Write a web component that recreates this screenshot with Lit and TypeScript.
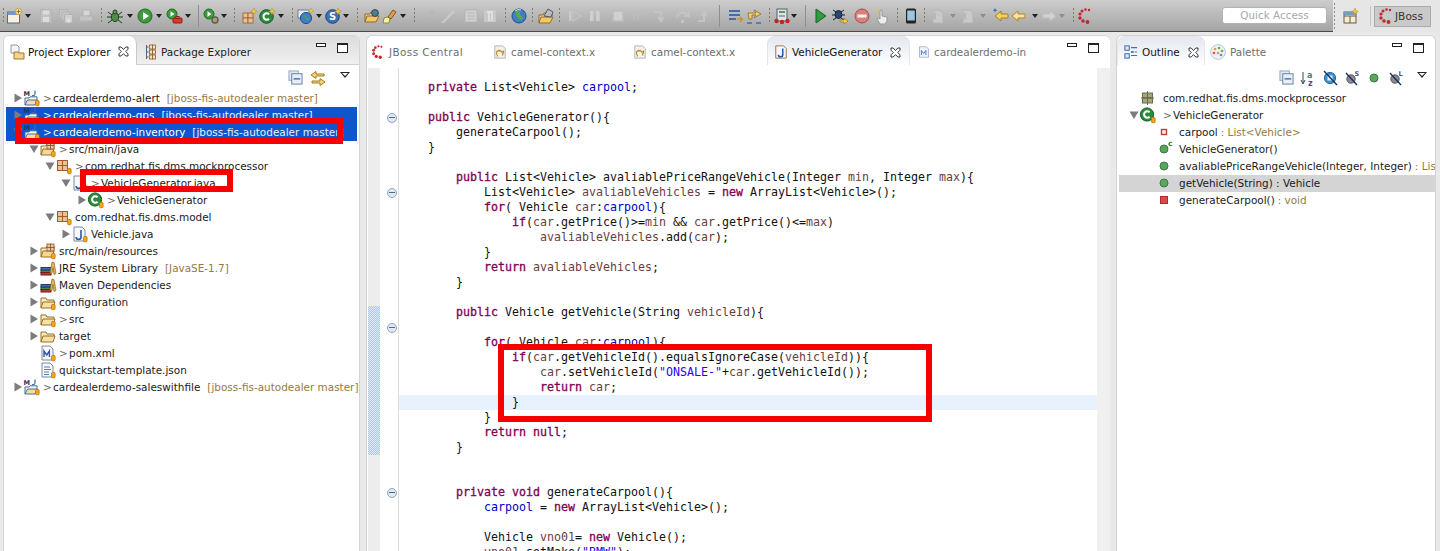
import { LitElement, html, css, svg } from "lit";
import { customElement } from "lit/decorators.js";

const jar = svg`<rect x="11.5" y="10.5" width="3.6" height="5.2" rx="1" fill="#f0a91e" stroke="#c56f0c" stroke-width=".8"/>`;
const ICONS: Record<string, any> = {
  newfile: svg`<rect x="1.5" y="4" width="12" height="11" fill="#f7f2dc" stroke="#4c6a93"/><rect x="1.5" y="4" width="12" height="3" fill="#6f9ad0"/><circle cx="12.5" cy="3.5" r="3.2" fill="#f6e3a2" stroke="#b98a1e" stroke-width=".7"/><path d="M12.5 1.5v4M10.5 3.5h4" stroke="#8f6a1c" stroke-width=".9"/>`,
  save: svg`<path d="M2.5 1.5h9l2 2v11h-11z" fill="#c2c2c2" stroke="#b4b4b4"/><rect x="5" y="2.5" width="6" height="4" fill="#dcdcdc"/><rect x="5" y="9" width="6" height="5" fill="#dcdcdc"/>`,
  saveall: svg`<path d="M1.5 1.5h8v8h-8z" fill="#c6c6c6" stroke="#b4b4b4"/><path d="M4 4h8v8H4z" fill="#c6c6c6" stroke="#b4b4b4"/><path d="M6.5 6.5h8v8h-8z" fill="#cfcfcf" stroke="#b4b4b4"/><rect x="8.5" y="10.5" width="4" height="4" fill="#e0e0e0"/>`,
  print: svg`<path d="M5 2h7v6H5z" fill="#d8d8d8" stroke="#b4b4b4"/><path d="M1.5 8h13v5h-13z" fill="#c4c4c4" stroke="#b4b4b4"/>`,
  bug: svg`<ellipse cx="8" cy="9" rx="3.6" ry="4.6" fill="#4f8f4a" stroke="#1f3d20"/><circle cx="8" cy="4" r="2" fill="#6a9c5c" stroke="#1f3d20"/><path d="M1 4l4 3M15 4l-4 3M0 9h4M12 9h4M1 15l4-3M15 15l-4-3" stroke="#1f3d20" fill="none"/>`,
  run: svg`<circle cx="8" cy="8" r="7" fill="#3c9b3c" stroke="#1e6a1e"/><path d="M6 4l6 4-6 4z" fill="#fff"/>`,
  ext: svg`<circle cx="6" cy="6" r="5" fill="#3c9b3c" stroke="#1e6a1e"/><path d="M4.5 3.2l4 2.8-4 2.8z" fill="#fff"/><rect x="7" y="10" width="9" height="5" rx="1" fill="#d63a2e" stroke="#8f1d15"/><rect x="10" y="8.5" width="3" height="2" fill="none" stroke="#8f1d15"/>`,
  hist: svg`<circle cx="6" cy="6" r="5" fill="#3c9b3c" stroke="#1e6a1e"/><path d="M4.5 3.2l4 2.8-4 2.8z" fill="#fff"/><circle cx="12" cy="12" r="3" fill="#a3a07a" stroke="#5f5d44" stroke-width="1.4"/>`,
  newpkg: svg`<g stroke="#a86d3a" fill="#e6c39a"><rect x="2" y="5" width="5" height="5"/><rect x="7" y="5" width="5" height="5"/><rect x="2" y="10" width="5" height="5"/><rect x="7" y="10" width="5" height="5"/></g><path d="M13 0l1 2.4 2.4 1-2.4 1-1 2.4-1-2.4-2.4-1 2.4-1z" fill="#f1c94a" stroke="#b98a1e" stroke-width=".5"/>`,
  newcls: svg`<circle cx="7.5" cy="8.5" r="6.8" fill="#2c8a3c" stroke="#145c22"/><path d="M10 6.3a3.2 3.2 0 1 0 0 4.4" fill="none" stroke="#fff" stroke-width="2"/><path d="M13 0l1 2.4 2.4 1-2.4 1-1 2.4-1-2.4-2.4-1 2.4-1z" fill="#f1c94a" stroke="#b98a1e" stroke-width=".5"/>`,
  newweb: svg`<rect x="1" y="2" width="11" height="8" fill="#e8edf5" stroke="#6d7f9b"/><circle cx="9" cy="10" r="5.6" fill="#3f7fc8" stroke="#234f87"/><path d="M6 8c2-2 4 0 3 2s3 2 4 1" fill="#59a74a"/><path d="M14 0l.9 2.1 2.1.9-2.1.9-.9 2.1-.9-2.1-2.1-.9 2.1-.9z" fill="#f1c94a" stroke="#b98a1e" stroke-width=".4"/>`,
  news: svg`<circle cx="7.5" cy="8.5" r="6.8" fill="#3f6fb5" stroke="#1e4480"/><text x="7.5" y="12" font-size="10" font-weight="700" font-family="DejaVu Sans" fill="#fff" text-anchor="middle">S</text><path d="M13 0l1 2.4 2.4 1-2.4 1-1 2.4-1-2.4-2.4-1 2.4-1z" fill="#f1c94a" stroke="#b98a1e" stroke-width=".5"/>`,
  openf: svg`<path d="M1 14V6h5l1-2h6v3" fill="#f0d08a" stroke="#8f6a28"/><path d="M1 14l2-6h12l-3 6z" fill="#f4c768" stroke="#8f6a28"/><circle cx="11" cy="5" r="3.4" fill="#4e7f8f" stroke="#2c4a55"/>`,
  brush: svg`<path d="M2 15l1-5 4-1 2 2-1 4z" fill="#f4efb0" stroke="#8f8a3a"/><path d="M7 9l5-7 3 2-5 7z" fill="#e0a040" stroke="#7f5a1c"/>`,
  dis1: svg`<path d="M2 4l5 4-5 4zM9 3h5v4H9z" fill="#b8b8b8"/>`,
  dis2: svg`<path d="M1 15L13 2l2 2L4 15z" fill="#c8c8c8"/>`,
  dis3: svg`<rect x="2" y="2" width="12" height="12" fill="#d2d2d2" stroke="#b4b4b4"/><path d="M4 5h8M4 8h8M4 11h8" stroke="#b4b4b4"/>`,
  para: svg`<rect x="2" y="2" width="12" height="12" fill="#c8c8c8"/><path d="M7 4v9M10 4v9M5 4h6" stroke="#e6e6e6" stroke-width="1.4" fill="none"/>`,
  globe: svg`<circle cx="8" cy="8" r="7" fill="#3f7fc8" stroke="#234f87"/><path d="M5 3c3-1 5 1 4 3s3 2 3 4-3 2-4 1-4-3-3-8z" fill="#5fa64a"/><path d="M4 3a6 6 0 0 1 6-1" stroke="#dce9f8" fill="none"/>`,
  openp: svg`<path d="M1 15V7h4l1-2h8v3" fill="#f2d7a0" stroke="#8f6a28"/><path d="M1 15l2-6h12l-3 6z" fill="#f4c768" stroke="#9a6f22"/><path d="M6 8l4-7 5 3-2 5z" fill="#b8bcc4" stroke="#55585e"/>`,
  resume: svg`<rect x="2" y="3" width="2.5" height="10" fill="#c9c9c9"/><path d="M6 3l8 5-8 5z" fill="none" stroke="#c2c2c2" stroke-width="1.5"/>`,
  pause: svg`<rect x="3" y="3" width="3.6" height="10" fill="#cfcfcf"/><rect x="9" y="3" width="3.6" height="10" fill="#cfcfcf"/>`,
  stopd: svg`<rect x="3" y="3" width="10" height="10" fill="#d0d0d0" stroke="#bcbcbc" stroke-width="1.4"/>`,
  dis4: svg`<path d="M3 13V4l4 7V4M9 3l4 4M13 3l-4 4" stroke="#bcbcbc" fill="none" stroke-width="1.5"/>`,
  stepin: svg`<path d="M2 4h7v8M6 9l3 4 3-4" stroke="#c4c4c4" fill="none" stroke-width="2"/>`,
  stepov: svg`<path d="M2 9a6 5 0 0 1 11-2M14 3v5h-5" stroke="#c4c4c4" fill="none" stroke-width="2"/><rect x="6" y="12" width="3" height="3" fill="#c4c4c4"/>`,
  stepret: svg`<path d="M3 13h6V5M6 8l3-4 3 4" stroke="#c4c4c4" fill="none" stroke-width="2"/>`,
  filter: svg`<path d="M1 3h11M1 7h11M1 11h7" stroke="#3f6ea8" stroke-width="2"/><path d="M9 11h5l-2-2m2 2l-2 3" stroke="#c2972e" stroke-width="1.6" fill="none"/>`,
  mergef: svg`<path d="M1 15h5M10 15h5" stroke="#3f6ea8" stroke-width="1.6"/><path d="M2 5h8l-2-3 7 4-7 4 2-3H6v4H3z" fill="#f2cd6a" stroke="#8f6a28" stroke-width=".8"/>`,
  server: svg`<rect x="3" y="1" width="10" height="12" fill="#dfe3e8" stroke="#55606e"/><rect x="5" y="3" width="6" height="2" fill="#5a9a52"/><rect x="5" y="7" width="6" height="2" fill="#9aa3ad"/><circle cx="2.5" cy="13" r="2.2" fill="#c9211e"/><circle cx="8" cy="14" r="2.2" fill="#c9211e"/><circle cx="13.5" cy="13" r="2.2" fill="#c9211e"/>`,
  playg: svg`<path d="M4 1l10 7-10 7z" fill="#2e9b3d" stroke="#176325"/>`,
  bugarr: svg`<ellipse cx="6.5" cy="6.5" rx="3.4" ry="4" fill="#264a70" stroke="#0f2036"/><path d="M1 2l3 2M12 2l-3 2M0 7h3M10 7h3M1 12l3-2M12 12l-3-2" stroke="#0f2036" fill="none"/><path d="M8 12h4v-2l4 3.2-4 2.8v-2H8z" fill="#f2cd4a" stroke="#8f6a28" stroke-width=".6"/>`,
  stopr: svg`<circle cx="8" cy="8" r="7" fill="#d8807c" stroke="#a94e4a"/><rect x="3.5" y="6.5" width="9" height="3" fill="#f4f0f0"/>`,
  hand: svg`<path d="M6 8V3a1 1 0 0 1 2 0v5l5 1v4l-2 3H6L3 11l1-1 2 1z" fill="#ececec" stroke="#9a9a9a"/><path d="M4 1l2 2M3 4h2" stroke="#e2bb45" stroke-width="1.4"/>`,
  phone: svg`<rect x="3" y="0.5" width="10" height="15" rx="1.5" fill="#222"/><rect x="4.2" y="2.5" width="7.6" height="10" fill="#9fc4de"/>`,
  dis5: svg`<path d="M3 2h7l3 3v10H3z" fill="#c9c9c9" stroke="#b4b4b4"/><path d="M1 8l5-4v8z" fill="#b8b8b8"/>`,
  navstar: svg`<path d="M16 6h-7V3L3 8l6 5v-3h7z" fill="#f6cf62" stroke="#a97e18"/><path d="M3 0l.7 1.6 1.6.7-1.6.7-.7 1.6-.7-1.6L.7 2.3l1.6-.7z" fill="#3e69b4"/>`,
  navl: svg`<path d="M15 6H8V3L2 8l6 5v-3h7z" fill="#fae2a0" stroke="#b18622"/>`,
  navr: svg`<path d="M1 6h7V3l6 5-6 5v-3H1z" fill="#d2d2d2" stroke="#c0c0c0"/>`,
  jboss: svg`<g fill="#c2272d"><circle cx="12" cy="2" r="1.2"/><circle cx="8.5" cy="1.5" r="1.3"/><circle cx="5" cy="3" r="1.5"/><circle cx="3" cy="6" r="1.6"/><circle cx="3" cy="10" r="1.7"/><circle cx="6" cy="13" r="1.8"/><circle cx="10.5" cy="14" r="1.9"/></g>`,
  persp: svg`<rect x="2" y="4" width="12" height="11" fill="#f4ecd8" stroke="#6b5a3a"/><path d="M2 8h12M8 8v7" stroke="#6b5a3a"/><rect x="2" y="4" width="12" height="3" fill="#7d9ac0"/><path d="M13 0l1 2.4 2.4 1-2.4 1-1 2.4-1-2.4-2.4-1 2.4-1z" fill="#f1c94a" stroke="#b98a1e" stroke-width=".5"/>`,
  projexp: svg`<path d="M2 1h6l2 2v6H2z" fill="#f5f5f5" stroke="#8c9ab0"/><path d="M5 8h4l1 1h5v6H5z" fill="#f3d48a" stroke="#a27a2c"/>`,
  pkgexp: svg`<path d="M1.5 1v14M1.5 3h2M1.5 8h2M1.5 13h2" stroke="#55606e"/><g fill="#f3e2c8" stroke="#8a5a2c" stroke-width=".8"><rect x="4.5" y="1" width="3" height="4"/><rect x="7.5" y="1" width="3" height="4"/><rect x="4.5" y="6" width="3" height="4"/><rect x="7.5" y="6" width="3" height="4"/><rect x="4.5" y="11" width="3" height="4"/><rect x="7.5" y="11" width="3" height="4"/></g>`,
  camel: svg`<path d="M2 1h9l3 3v11H2z" fill="#f7f1e2" stroke="#a7b0bd"/><path d="M4 11V8l2-2 1 1 1-1 2 2 2-1v2l-1 1v2M5 11v2" stroke="#b98b3a" stroke-width="1.4" fill="none"/>`,
  javaed: svg`<path d="M2 1h9l3 3v11H2z" fill="#f8f8fb" stroke="#8a6a32"/><path d="M10 4v7a2.5 2.5 0 0 1-5 0" stroke="#2c56a8" stroke-width="1.8" fill="none"/>`,
  mfile: svg`<path d="M2 1h9l3 3v11H2z" fill="#eef3f9" stroke="#9aa8ba"/><path d="M4.5 12V6l3 4 3-4v6" stroke="#4f80ba" stroke-width="1.3" fill="none"/>`,
  collapse: svg`<rect x="1" y="1" width="10" height="10" fill="#dfe7f1" stroke="#8fa3bd"/><rect x="4" y="4" width="11" height="11" fill="#e8eff7" stroke="#5c7ea6"/><path d="M6 9.5h7" stroke="#2f5c94" stroke-width="1.4"/>`,
  link: svg`<path d="M14 4H6V1.5L1 5l5 3.5V6h8z" fill="#f6d67e" stroke="#a57b1c"/><path d="M2 11h8V8.5l5 3.5-5 3.5V13H2z" fill="#f6d67e" stroke="#a57b1c"/>`,
  project: svg`<text x="-0.5" y="5.5" font-size="6.5" font-weight="700" font-family="DejaVu Sans" fill="#1f3560">M</text><path d="M11 0.5v3.5a2 2 0 0 1-3 1.4" fill="none" stroke="#3f6aa6" stroke-width="1.2"/><path d="M1 15V8h4l1-1.2h7V10" fill="#fff8e4" stroke="#3f6aa6"/><path d="M1 15l2.5-5H13l-2 5z" fill="#f7dfa2" stroke="#3f6aa6"/>${jar}`,
  srcf: svg`<path d="M1 14V5h5l1-2h7v5" fill="#fbe9bf" stroke="#96702a"/><path d="M1 14l2-6h11l-2 6z" fill="#f5d894" stroke="#96702a"/><g fill="#e9c9a0" stroke="#96512a" stroke-width=".8"><rect x="7" y="1" width="3.5" height="3.5"/><rect x="10.5" y="1" width="3.5" height="3.5"/><rect x="7" y="4.5" width="3.5" height="3.5"/><rect x="10.5" y="4.5" width="3.5" height="3.5"/></g>${jar}`,
  pkg: svg`<g fill="#e6c39a" stroke="#a35a2c"><rect x="1.5" y="2.5" width="5" height="5"/><rect x="6.5" y="2.5" width="5" height="5"/><rect x="1.5" y="7.5" width="5" height="5"/><rect x="6.5" y="7.5" width="5" height="5"/></g>${jar}`,
  pkgo: svg`<g fill="#a7a67c" stroke="#6b6a4c"><rect x="2.5" y="3" width="5" height="5"/><rect x="7.5" y="3" width="5" height="5"/><rect x="2.5" y="8" width="5" height="5"/><rect x="7.5" y="8" width="5" height="5"/></g><path d="M7.5 1v14M1 8h13" stroke="#6b6a4c"/>`,
  java: svg`<path d="M2 1h8l3 3v11H2z" fill="#f8f8fb" stroke="#7b8a9e"/><path d="M9 4v7a2.4 2.4 0 0 1-4.8 0" stroke="#2c56a8" stroke-width="1.6" fill="none"/>${jar}`,
  cls: svg`<circle cx="7" cy="7.5" r="6.6" fill="#2c8a3c" stroke="#145c22"/><path d="M9.6 5.3a3.2 3.2 0 1 0 0 4.4" fill="none" stroke="#fff" stroke-width="2"/>${jar}`,
  lib: svg`<rect x="1" y="10" width="10" height="2.5" fill="#3f8f4f" stroke="#1f4a2a"/><rect x="1" y="7.5" width="10" height="2.5" fill="#3f6fb5" stroke="#1f3a6a"/><rect x="1" y="12.5" width="10" height="2.5" fill="#c0392b" stroke="#6d1d15"/><path d="M10 13l2-11 2 .5 2 11-2 1-1-7-1 6z" fill="#e6b45a" stroke="#8a6420" stroke-width=".7"/>`,
  folder: svg`<path d="M1 14V4h5l1 2h7v2" fill="#fbe9bf" stroke="#96702a"/><path d="M1 14l2-6h12l-2 6z" fill="#f8dfa4" stroke="#96702a"/>`,
  folderj: svg`<path d="M1 14V4h5l1 2h7v2" fill="#fbe9bf" stroke="#96702a"/><path d="M1 14l2-6h12l-2 6z" fill="#f8dfa4" stroke="#96702a"/>${jar}`,
  pom: svg`<path d="M2 1h8l3 3v11H2z" fill="#f8f8fb" stroke="#7b8a9e"/><path d="M4 12V6l2.7 4 2.7-4v6" stroke="#2c56a8" stroke-width="1.4" fill="none"/>${jar}`,
  doc: svg`<path d="M2 1h8l3 3v11H2z" fill="#f8f8fb" stroke="#7b8a9e"/><path d="M4 5h6M4 7.5h7M4 10h5M4 12.5h5" stroke="#4f80ba"/>${jar}`,
  green: svg`<circle cx="8" cy="8" r="4" fill="#5aa65e" stroke="#3a7a42"/>`,
  greenc: svg`<circle cx="8" cy="8" r="4" fill="#5aa65e" stroke="#3a7a42"/><text x="12" y="5" font-size="7.5" font-weight="700" font-family="DejaVu Sans" fill="#1e8a2e">c</text>`,
  redsm: svg`<rect x="5.5" y="5.5" width="5" height="5" fill="#f6f0f0" stroke="#c23a3a" stroke-width="1.4"/>`,
  redsq: svg`<rect x="4.5" y="4.5" width="7" height="7" fill="#e0474b" stroke="#b02a2e"/>`,
  sortaz: svg`<path d="M3 2v11M1 10l2 4 2-4" stroke="#444" fill="none"/><text x="7" y="7.5" font-size="8" font-weight="700" font-family="DejaVu Sans" fill="#2f8a78">a</text><text x="8" y="15.5" font-size="8" font-weight="700" font-family="DejaVu Sans" fill="#7a2f96">z</text>`,
  hidef: svg`<circle cx="8" cy="8" r="5.6" fill="#3f93c9" stroke="#1f6a99"/><rect x="5.5" y="5.5" width="5" height="5" fill="#e8f2fa"/><path d="M2 1l13 14" stroke="#17306a" stroke-width="1.4"/>`,
  hides: svg`<circle cx="7" cy="9" r="4.2" fill="#8c8c8c" stroke="#5a5a5a"/><path d="M2 3l11 12" stroke="#17306a" stroke-width="1.4"/><text x="10.5" y="6" font-size="6.5" font-weight="700" font-family="DejaVu Sans" fill="#3a5a90">S</text>`,
  hidel: svg`<circle cx="7" cy="9" r="4.2" fill="#8c8c8c" stroke="#5a5a5a"/><path d="M2 3l11 12" stroke="#17306a" stroke-width="1.4"/><text x="10.5" y="6" font-size="6.5" font-weight="700" font-family="DejaVu Sans" fill="#3a5a90">L</text>`,
  outline: svg`<rect x="1" y="1" width="5" height="5" fill="#dfeaf7" stroke="#3f6fb5" stroke-width="1.2"/><rect x="1" y="10" width="5" height="5" fill="#dfeaf7" stroke="#3f6fb5" stroke-width="1.2"/><path d="M8 3h7M8 12h7" stroke="#3f6fb5" stroke-width="1.2"/><rect x="8" y="7" width="3" height="2" fill="#3f6fb5"/><path d="M12 8h3" stroke="#3f6fb5"/>`,
  palette: svg`<circle cx="8" cy="8" r="7.4" fill="#eef1f6" stroke="#bcc6d6"/><circle cx="5" cy="5" r="1.3" fill="#e0a040"/><circle cx="9" cy="4" r="1.3" fill="#6fae5a"/><circle cx="12" cy="7" r="1.3" fill="#6fae5a"/><circle cx="4" cy="9" r="1.3" fill="#d9534f"/><circle cx="8" cy="9" r="1.3" fill="#e0a040"/><circle cx="11" cy="11" r="1.3" fill="#5a8fd0"/>`,
};

const ic = (n: string, s = 16) => html`<svg class="ic" width=${s} height=${s} viewBox="0 0 16 16">${ICONS[n]}</svg>`;
const closeX = html`<svg class="ic" width="11" height="11" viewBox="0 0 11 11"><path d="M1 1h2.2L5.5 3.5 7.8 1H10v2.2L7.7 5.5 10 7.8V10H7.8L5.5 7.6 3.2 10H1V7.8l2.3-2.3L1 3.2z" fill="#fff" stroke="#222" stroke-width=".9"/></svg>`;

// [kind, centre x]: slots are sized from the distance between neighbours
const TB: [string, number][] = [["grip",3],["newfile",15],["a",29],["save",46],["saveall",68],["print",89],["grip",103],["bug",117],["a",130],["run",147],["a",160],["ext",176],["a",190],["sep",200],["hist",211],["a",227],["grip",235],["newpkg",248],["newcls",270],["a",284],["grip",292],["newweb",307],["a",319],["news",335],["a",349],["grip",358],["openf",371],["brush",393],["a",405],["grip",415],["dis1",427],["dis2",450],["dis3",472],["para",494],["grip",507],["globe",521],["grip",534],["openp",548],["grip",561],["resume",574],["pause",597],["stopd",619],["dis4",641],["stepin",661],["stepov",684],["stepret",707],["sep",721],["filter",736],["mergef",757],["grip",771],["server",783],["a",797],["sep",806],["playg",819],["bugarr",841],["stopr",864],["hand",885],["grip",899],["phone",913],["grip",926],["dis5",939],["ag",955],["dis5",970],["ag",983],["navstar",1000],["navl",1022],["a",1035],["navr",1052],["ag",1065],["grip",1073],["jboss",1087]];

interface Row { l: number; a?: string; i: string; p?: boolean; n: string; d?: string; s?: boolean; }
const TREE: Row[] = [
  { l: 0, a: "r", i: "project", p: true, n: "cardealerdemo-alert", d: "[jboss-fis-autodealer master]" },
  { l: 0, a: "r", i: "project", p: true, n: "cardealerdemo-gps", d: "[jboss-fis-autodealer master]", s: true },
  { l: 0, a: "d", i: "project", p: true, n: "cardealerdemo-inventory", d: "[jboss-fis-autodealer master]", s: true },
  { l: 1, a: "d", i: "srcf", p: true, n: "src/main/java" },
  { l: 2, a: "d", i: "pkg", p: true, n: "com.redhat.fis.dms.mockprocessor" },
  { l: 3, a: "d", i: "java", p: true, n: "VehicleGenerator.java" },
  { l: 4, a: "r", i: "cls", p: true, n: "VehicleGenerator" },
  { l: 2, a: "d", i: "pkg", n: "com.redhat.fis.dms.model" },
  { l: 3, a: "r", i: "java", n: "Vehicle.java" },
  { l: 1, a: "r", i: "srcf", n: "src/main/resources" },
  { l: 1, a: "r", i: "lib", n: "JRE System Library", d: "[JavaSE-1.7]" },
  { l: 1, a: "r", i: "lib", n: "Maven Dependencies" },
  { l: 1, a: "r", i: "folderj", n: "configuration" },
  { l: 1, a: "r", i: "folderj", p: true, n: "src" },
  { l: 1, a: "r", i: "folder", n: "target" },
  { l: 1, i: "pom", p: true, n: "pom.xml" },
  { l: 1, i: "doc", n: "quickstart-template.json" },
  { l: 0, a: "r", i: "project", p: true, n: "cardealerdemo-saleswithfile", d: "[jboss-fis-autodealer master]" },
];

const OUTLINE: Row[] = [
  { l: 0, i: "pkgo", n: "com.redhat.fis.dms.mockprocessor" },
  { l: 0, a: "d", i: "cls", p: true, n: "VehicleGenerator" },
  { l: 1, i: "redsm", n: "carpool", d: ": List<Vehicle>" },
  { l: 1, i: "greenc", n: "VehicleGenerator()" },
  { l: 1, i: "green", n: "avaliablePriceRangeVehicle(Integer, Integer)", d: ": List<Vehicle>" },
  { l: 1, i: "green", n: "getVehicle(String) : Vehicle", s: true },
  { l: 1, i: "redsq", n: "generateCarpool()", d: ": void" },
];

const CODE = `
    private List<Vehicle> carpool;

    public VehicleGenerator(){
        generateCarpool();
    }

        public List<Vehicle> avaliablePriceRangeVehicle(Integer min, Integer max){
            List<Vehicle> avaliableVehicles = new ArrayList<Vehicle>();
            for( Vehicle car:carpool){
                if(car.getPrice()>=min && car.getPrice()<=max)
                    avaliableVehicles.add(car);
            }
            return avaliableVehicles;
        }

        public Vehicle getVehicle(String vehicleId){

            for( Vehicle car:carpool){
                if(car.getVehicleId().equalsIgnoreCase(vehicleId)){
                    car.setVehicleId("ONSALE-"+car.getVehicleId());
                    return car;
                }
            }
            return null;
        }


        private void generateCarpool(){
            carpool = new ArrayList<Vehicle>();

            Vehicle vno01= new Vehicle();
            vno01.setMake("BMW");`.slice(1).split("\n");

const FOLD = new Set([2, 7, 16, 27]);
const CURRENT = 21;
const TOK = /("[^"]*"|\b(?:public|private|void|new|for|if|return|null)\b|\bcarpool\b|\b(?:car|vehicleId|min|max|avaliableVehicles|vno01)\b)/;
const tok = (line: string) =>
  line.split(TOK).map((t, i) => {
    if (i % 2 === 0) return t;
    if (t[0] === '"') return html`<span class="str">${t}</span>`;
    if (t === "carpool") return html`<span class="fld">${t}</span>`;
    if (/^(car|vehicleId|min|max|avaliableVehicles|vno01)$/.test(t)) return html`<span class="loc">${t}</span>`;
    return html`<span class="kw">${t}</span>`;
  });

const arrow = (a?: string) =>
  a === "r"
    ? html`<svg class="ic" width="10" height="10" viewBox="0 0 10 10"><path d="M1.5 0.5L9 5 1.5 9.5z" fill="#7c7c7c"/></svg>`
    : a === "d"
    ? html`<svg class="ic" width="10" height="10" viewBox="0 0 10 10"><path d="M0.5 1.5H9.5L5 9z" fill="#7c7c7c"/></svg>`
    : html`<span class="noarrow"></span>`;

const minMax = html`<div class="minmax"><span class="mn"></span><span class="mx"></span></div>`;

@customElement("app-root")
export class AppRoot extends LitElement {
  static styles = css`
    :host { display: block; position: relative; width: 1440px; height: 551px; overflow: hidden; background: #e9e9e9; font-family: "DejaVu Sans", sans-serif; font-size: 10.45px; color: #1a1a1a; }
    .ic { display: block; flex: none; overflow: visible; }
    .top { display: flex; height: 32px; }
    .tb { flex: none; width: 1333px; height: 32px; box-sizing: border-box; display: flex; align-items: center; background: linear-gradient(#cdcdcd, #a4a4a4); border-bottom: 1px solid #4a4a4a; }
    .slot { flex: none; display: flex; align-items: center; justify-content: center; height: 24px; }
    .grip { width: 1px; height: 15px; background-image: repeating-linear-gradient(#7f7f5f 0 2px, transparent 2px 4px); }
    .sepv { width: 1px; height: 22px; background: #8f8f8f; }
    .arr { width: 0; height: 0; border-left: 3.5px solid transparent; border-right: 3.5px solid transparent; border-top: 4px solid #222; }
    .arr.g { border-top-color: #8e8e8e; }
    .quick { position: absolute; left: 1222px; top: 7px; width: 105px; height: 17px; box-sizing: border-box; border: 1px solid #b2b2b2; border-radius: 3px; background: #fff; color: #a8a8a8; text-align: center; font-size: 10.4px; line-height: 15px; }
    .persp { flex: 1; display: flex; align-items: center; padding-left: 1px; background: #e6e6e6; height: 32px; }
    .grip2 { width: 1px; height: 26px; margin-right: 7px; background-image: repeating-linear-gradient(#8c8c8c 0 2px, transparent 2px 4px); }
    .psep { width: 1px; height: 20px; background: #c4c4c4; margin: 0 3px 0 12px; }
    .jb { display: flex; align-items: center; gap: 1px; width: 57px; height: 21px; box-sizing: border-box; padding-left: 3px; background: #c9c9c9; border: 1px solid #ababab; color: #333; font-size: 10.6px; }

    .main { display: flex; height: 519px; padding: 3px 4px 0 3px; box-sizing: border-box; gap: 6px; }
    .pane { background: #fff; border-radius: 6px 6px 0 0; border: 1px solid #d4d4d4; border-bottom: 0; box-sizing: border-box; display: flex; flex-direction: column; overflow: hidden; flex: none; height: 100%; }
    .left { width: 357px; }
    .center { width: 744px; border-right: 0; }
    .right { width: 320px; }
    .tabs { flex: none; box-sizing: border-box; height: 29px; display: flex; align-items: center; position: relative; }
    .left .tabs { background: linear-gradient(#dcdcdc, #f0f0f0); border-bottom: 1px solid #d0d0d0; }
    .tab { display: flex; align-items: center; height: 100%; box-sizing: border-box; flex: none; padding-top: 2px; color: #6e6e6e; white-space: nowrap; gap: 4px; }
    .tab.on { color: #111; }
    .wide { letter-spacing: .4px; }
    .left .tab.on { background: #fff; width: 133px; padding-left: 5px; gap: 3px; border-radius: 0 8px 0 0; border-right: 1px solid #c8c8c8; height: 29px; margin-top: 1px; }
    .left .tab.off { padding: 3px 0 0 8px; gap: 0; color: #222; }
    .center .tab.on, .right .tab.on { background: linear-gradient(#e3e7ef, #fff); border-radius: 8px 8px 0 0; border: 1px solid #e2e5ea; border-bottom: 0; }
    .tab .x { margin-left: 4px; }
    .minmax { position: absolute; right: 0; top: 0; display: flex; }
    .mn { position: absolute; box-sizing: border-box; width: 10px; height: 4px; border: 1px solid #222; background: #fff; }
    .mx { position: absolute; box-sizing: border-box; width: 11px; height: 10px; border: 1px solid #222; border-top-width: 2px; background: #fff; }
    .mn { top: 7px; right: 33px; } .mx { top: 7px; right: 11px; }
    .vbar { flex: none; height: 25px; display: flex; justify-content: flex-end; align-items: center; gap: 7px; padding-right: 9px; }
    .right .vbar { gap: 6px; padding-right: 8px; }
    .menu { width: 0; height: 0; border-left: 5.5px solid transparent; border-right: 5.5px solid transparent; border-top: 6px solid #222; margin: -6px 0 0 7.5px; position: relative; }
    .menu::after { content: ""; position: absolute; left: -3.5px; top: -5px; border-left: 3.5px solid transparent; border-right: 3.5px solid transparent; border-top: 3.8px solid #fff; }
    .tree { flex: 1; overflow: hidden; padding: 0 2px; }
    .right .tree { padding: 0 0 0 2px; }
    .row { display: flex; align-items: center; height: 17px; box-sizing: border-box; padding-bottom: 1px; white-space: nowrap; }
    .row .noarrow { width: 10px; flex: none; }
    .row .i { margin-left: 1px; width: 17px; flex: none; }
    .right .row .i { width: 21px; }
    .row .gt { color: #6d6d6d; margin-left: 2px; width: 8px; flex: none; }
    .row .nm { margin-left: 2px; }
    .row .dc { color: #95793f; margin-left: 7px; }
    .right .row .dc { margin-left: 3px; }
    .row.sel { background: #0f55cb; color: #fff; }
    .row.sel .gt, .row.sel .dc { color: #e9f0fb; }
    .row.gray { background: #d4d4d4; }

    .edit { flex: 1; display: flex; min-height: 0; margin-top: 3px; padding-left: 1px; overflow: hidden; }
    .ruler { flex: none; width: 12px; background: #ededed; display: flex; flex-direction: column; }
    .ruler .g1 { height: 238px; flex: none; }
    .ruler .hatch { height: 149px; flex: none; background: repeating-conic-gradient(#a9c9f0 0 25%, #dce9fa 0 50%) 0 0 / 2px 2px; }
    .lines { flex: 1; min-width: 0; overflow: hidden; }
    .ln { display: flex; height: 15px; }
    .ln.pad { height: 12px; }
    .fold { flex: none; width: 19px; box-sizing: border-box; border-right: 1px solid #dedede; display: flex; align-items: center; justify-content: center; padding-left: 6px; }
    .fi { width: 10px; height: 10px; border-radius: 50%; box-sizing: border-box; border: 1px solid #8fa5c0; background: #dfe8f3; display: flex; align-items: center; justify-content: center; }
    .fi::after { content: ""; width: 6px; height: 1px; background: #51688a; }
    .code { flex: 1; padding-left: 1px; font: 11.63px/15px "DejaVu Sans Mono", monospace; white-space: pre; color: #111; }
    .ln.cur .code { background: #e8f2fe; }
    .kw { color: #7f0055; -webkit-text-stroke: .3px #7f0055; }
    .fld { color: #0000c0; }
    .str { color: #2a00ff; }
    .loc { color: #6a3e3e; }
    .over { flex: none; width: 13px; background: #f0f0f0; }

    .mark { position: absolute; box-sizing: border-box; border: 6px solid #f70000; pointer-events: none; }
    .m1 { left: 15px; top: 118px; width: 328px; height: 26px; }
    .m2 { left: 80px; top: 169px; width: 153px; height: 23px; }
    .m3 { left: 498px; top: 344px; width: 434px; height: 78px; }
  `;

  private toolbar() {
    return TB.map(([k, c], i) => {
      const prev = i ? TB[i - 1][1] : 0;
      const next = i < TB.length - 1 ? TB[i + 1][1] : c + 10;
      const w = (next - c) / 2 + (c - prev) / 2;
      let inner;
      if (k === "grip") inner = html`<span class="grip"></span>`;
      else if (k === "sep") inner = html`<span class="sepv"></span>`;
      else if (k === "a") inner = html`<span class="arr"></span>`;
      else if (k === "ag") inner = html`<span class="arr g"></span>`;
      else inner = ic(k);
      return html`<span class="slot" style="width:${w}px">${inner}</span>`;
    });
  }

  private rowBody(r: Row, withArrow: boolean) {
    return html`${withArrow ? arrow(r.a) : ""}<span class="i">${ic(r.i)}</span>
      ${r.p ? html`<span class="gt">&gt;</span>` : ""}
      <span class="nm">${r.n}</span>${r.d ? html`<span class="dc">${r.d}</span>` : ""}`;
  }

  private treeRow(r: Row) {
    return html`<div class="row ${r.s ? "sel" : ""}" style="padding-left:${7 + r.l * 16}px">${this.rowBody(r, true)}</div>`;
  }

  private outlineRow(r: Row) {
    return html`<div class="row ${r.s ? "gray" : ""}" style="padding-left:${r.l ? 36 : 10}px">${this.rowBody(r, !r.l)}</div>`;
  }

  render() {
    return html`
      <div class="top">
        <div class="tb">${this.toolbar()}</div>
        <div class="persp">
          <span class="grip2"></span>
          ${ic("persp")}
          <span class="psep"></span>
          <div class="jb">${ic("jboss")}JBoss</div>
        </div>
      </div>
      <div class="quick">Quick Access</div>
      <div class="main">
        <section class="pane left">
          <div class="tabs">
            <div class="tab on">${ic("projexp")}Project Explorer<span class="x">${closeX}</span></div>
            <div class="tab off">${ic("pkgexp")}Package Explorer</div>
            ${minMax}
          </div>
          <div class="vbar">${ic("collapse", 15)}${ic("link")}<span class="menu"></span></div>
          <div class="tree">${TREE.map((r) => this.treeRow(r))}</div>
        </section>
        <section class="pane center">
          <div class="tabs">
            <div class="tab" style="margin-left:4px;width:122px">${ic("jboss", 14)}<span class="wide">JBoss Central</span></div>
            <div class="tab" style="width:140px">${ic("camel", 14)}camel-context.x</div>
            <div class="tab" style="width:134px">${ic("camel", 14)}camel-context.x</div>
            <div class="tab on" style="width:143px;padding-left:6px">${ic("javaed", 14)}VehicleGenerator<span class="x">${closeX}</span></div>
            <div class="tab" style="margin-left:8px">${ic("mfile", 12)}cardealerdemo-in</div>
            ${minMax}
          </div>
          <div class="edit">
            <div class="ruler"><div class="g1"></div><div class="hatch"></div></div>
            <div class="lines">
              <div class="ln pad"><div class="fold"></div><div class="code"></div></div>
              ${CODE.map(
                (l, i) => html`<div class="ln ${i === CURRENT ? "cur" : ""}">
                  <div class="fold">${FOLD.has(i) ? html`<span class="fi"></span>` : ""}</div>
                  <div class="code">${tok(l)}</div>
                </div>`
              )}
            </div>
            <div class="over"></div>
          </div>
        </section>
        <section class="pane right">
          <div class="tabs">
            <div class="tab on" style="width:88px;padding-left:6px">${ic("outline", 14)}Outline<span class="x">${closeX}</span></div>
            <div class="tab" style="margin-left:5px">${ic("palette")}Palette</div>
            ${minMax}
          </div>
          <div class="vbar">${ic("collapse", 15)}${ic("sortaz")}${ic("hidef")}${ic("hides")}${ic("green")}${ic("hidel")}<span class="menu"></span></div>
          <div class="tree">${OUTLINE.map((r) => this.outlineRow(r))}</div>
        </section>
      </div>
      <div class="mark m1"></div>
      <div class="mark m2"></div>
      <div class="mark m3"></div>
    `;
  }
}
